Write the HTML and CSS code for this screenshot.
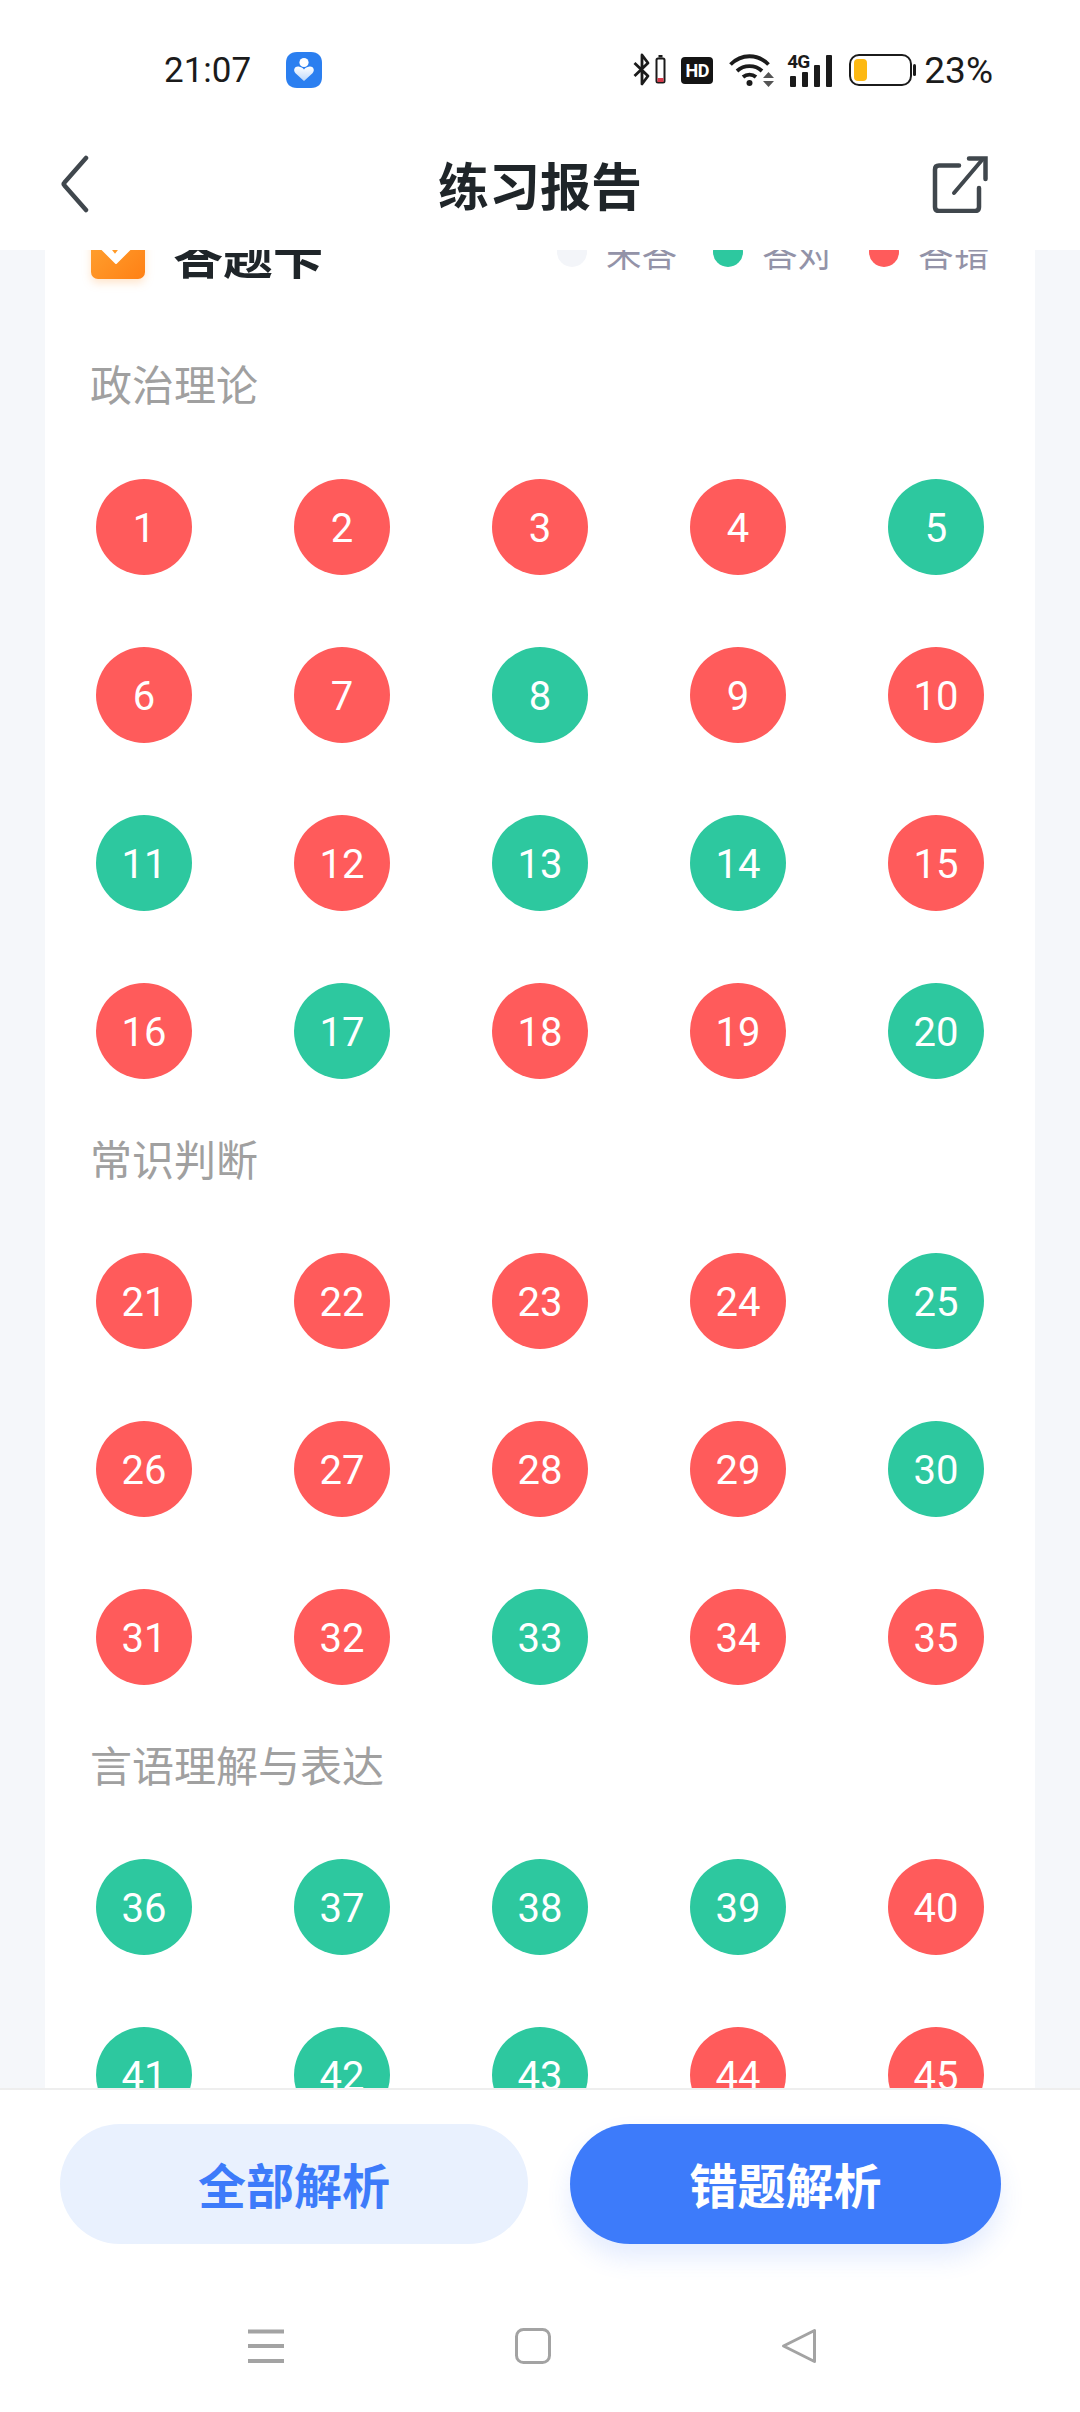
FILE: index.html
```html
<!DOCTYPE html>
<html lang="zh">
<head>
<meta charset="utf-8">
<title>练习报告</title>
<link rel="stylesheet" href="styles.css">
</head>
<body>
<div class="app">
  <header class="top">
    <div class="status">
      <span class="time">21:07</span>
      <svg class="guard" viewBox="0 0 36 36" width="36" height="36">
        <defs><linearGradient id="hg" x1="0" y1="0" x2="0" y2="1"><stop offset="0" stop-color="#ffffff"/><stop offset="1" stop-color="#bcd8fb"/></linearGradient></defs>
        <path d="M11 0H25C32 0 36 4 36 11V25C36 32 32 36 25 36H11C4 36 0 32 0 25V11C0 4 4 0 11 0Z" fill="#2b7ff0"/>
        <circle cx="18" cy="10.500" r="4.600" fill="#fff"/>
        <path d="M18 29L9.500 21.200C6.500 18 9 14 12.600 14.600C15 15 16.600 16 18 17.400C19.400 16 21 15 23.400 14.600C27 14 29.500 18 26.500 21.200Z" fill="url(#hg)"/>
      </svg>
      <div class="sys">
        <svg class="bt" viewBox="0 0 33 34" width="33" height="34">
          <path d="M1.500 10L15 23L9 31V2L15 10L1.500 23" fill="none" stroke="#1b1b1b" stroke-width="2.800" stroke-linejoin="round"/>
          <rect x="23.500" y="5.500" width="8" height="24" rx="1.500" fill="none" stroke="#1b1b1b" stroke-width="2"/>
          <rect x="25.500" y="2" width="4" height="2.500" fill="#1b1b1b"/>
          <rect x="24.500" y="25" width="6" height="4" fill="#d8394a"/>
        </svg>
        <span class="hd">HD</span>
        <svg class="wifi" viewBox="0 0 45 34" width="45" height="34">
          <path d="M1.500 11.500C12.500 0.500 28.500 0.500 39.500 11.500" fill="none" stroke="#1b1b1b" stroke-width="3.800"/>
          <path d="M8 18C15 11.500 26 11.500 33 18" fill="none" stroke="#1b1b1b" stroke-width="3.800"/>
          <path d="M14 24C17.800 20.800 23.200 20.800 27 24" fill="none" stroke="#1b1b1b" stroke-width="3.800"/>
          <circle cx="20.500" cy="30" r="3" fill="#1b1b1b"/>
          <path d="M34 25L39.500 19L45 25ZM34 28H45L39.500 34Z" fill="#555"/>
        </svg>
        <div class="sig">
          <span class="g4">4G</span>
          <svg viewBox="0 0 46 34" width="46" height="34">
            <rect x="3" y="23" width="6" height="11" rx="1" fill="#1b1b1b"/>
            <rect x="15" y="19" width="6" height="15" rx="1" fill="#1b1b1b"/>
            <rect x="27" y="12" width="6" height="22" rx="1" fill="#1b1b1b"/>
            <rect x="39" y="2" width="6" height="32" rx="1" fill="#1b1b1b"/>
          </svg>
        </div>
        <svg class="batt" viewBox="0 0 67 32" width="67" height="32">
          <rect x="1" y="1" width="61" height="30" rx="9" fill="none" stroke="#1b1b1b" stroke-width="2"/>
          <rect x="5" y="5" width="13" height="22" rx="4" fill="#fdb913"/>
          <rect x="64" y="10" width="3" height="12" rx="1.500" fill="#1b1b1b"/>
        </svg>
        <span class="pct">23%</span>
      </div>
    </div>
    <div class="nav">
      <svg class="back" viewBox="0 0 30 58" width="30" height="58">
        <path d="M26 3L4.500 27.500Q3 29 4.500 30.500L26 55" fill="none" stroke="#40474d" stroke-width="4.500" stroke-linecap="round"/>
      </svg>
      <h1 class="title">练习报告</h1>
      <svg class="share" viewBox="0 0 58 58" width="58" height="58">
        <path d="M27 10.500H7Q3 10.500 3 14.500V52Q3 56 7 56H43Q47 56 47 52V33" fill="none" stroke="#40474d" stroke-width="4.500" stroke-linecap="round"/>
        <path d="M22 38L50 5" fill="none" stroke="#40474d" stroke-width="4" stroke-linecap="round"/>
        <path d="M37 3.500H53.500V24" fill="none" stroke="#40474d" stroke-width="4.500" stroke-linecap="round"/>
      </svg>
    </div>
  </header>

  <main class="scroll">
    <section class="card">
      <div class="head">
        <div class="brand">
          <svg class="ico" viewBox="0 0 54 54" width="54" height="54">
            <defs><linearGradient id="og" x1="0" y1="0" x2="1" y2="1"><stop offset="0" stop-color="#ffa633"/><stop offset="1" stop-color="#ff8015"/></linearGradient></defs>
            <rect x="0" y="0" width="54" height="54" rx="7" fill="url(#og)"/>
            <path d="M11 12H39V24L25 38L11 24Z" fill="#fff" stroke="#fff" stroke-width="2" stroke-linejoin="round"/>
            <path d="M20 21L24 26L31 17" fill="none" stroke="#ff9a28" stroke-width="3.500"/>
          </svg>
          <h2 class="cardname">答题卡</h2>
        </div>
        <ul class="legend">
          <li class="key"><i class="dot none"></i>未答</li>
          <li class="key"><i class="dot ok"></i>答对</li>
          <li class="key"><i class="dot bad"></i>答错</li>
        </ul>
      </div>

      <h3 class="label">政治理论</h3>
      <div class="grid">
        <span class="q bad">1</span><span class="q bad">2</span><span class="q bad">3</span><span class="q bad">4</span><span class="q ok">5</span>
        <span class="q bad">6</span><span class="q bad">7</span><span class="q ok">8</span><span class="q bad">9</span><span class="q bad">10</span>
        <span class="q ok">11</span><span class="q bad">12</span><span class="q ok">13</span><span class="q ok">14</span><span class="q bad">15</span>
        <span class="q bad">16</span><span class="q ok">17</span><span class="q bad">18</span><span class="q bad">19</span><span class="q ok">20</span>
      </div>

      <h3 class="label">常识判断</h3>
      <div class="grid">
        <span class="q bad">21</span><span class="q bad">22</span><span class="q bad">23</span><span class="q bad">24</span><span class="q ok">25</span>
        <span class="q bad">26</span><span class="q bad">27</span><span class="q bad">28</span><span class="q bad">29</span><span class="q ok">30</span>
        <span class="q bad">31</span><span class="q bad">32</span><span class="q ok">33</span><span class="q bad">34</span><span class="q bad">35</span>
      </div>

      <h3 class="label">言语理解与表达</h3>
      <div class="grid">
        <span class="q ok">36</span><span class="q ok">37</span><span class="q ok">38</span><span class="q ok">39</span><span class="q bad">40</span>
        <span class="q ok">41</span><span class="q ok">42</span><span class="q ok">43</span><span class="q bad">44</span><span class="q bad">45</span>
      </div>
    </section>
  </main>

  <footer class="foot">
    <div class="actions">
      <button class="btn light">全部解析</button>
      <button class="btn solid">错题解析</button>
    </div>
    <div class="sysnav">
      <svg viewBox="0 0 36 36" width="36" height="36">
        <path d="M0 3.500H36M0 18H36M0 33H36" stroke="#a3a3a3" stroke-width="4"/>
      </svg>
      <svg viewBox="0 0 36 36" width="36" height="36">
        <rect x="1.500" y="1.500" width="33" height="33" rx="7" fill="none" stroke="#a3a3a3" stroke-width="3"/>
      </svg>
      <svg viewBox="0 0 36 36" width="36" height="36">
        <path d="M33.500 2.500V33.500L2.500 18Z" fill="none" stroke="#a3a3a3" stroke-width="3" stroke-linejoin="round"/>
      </svg>
    </div>
  </footer>
</div>
</body>
</html>
```

FILE: styles.css
```css
* { box-sizing: border-box; }
html, body { margin: 0; padding: 0; }
body {
  width: 1080px;
  height: 2412px;
  overflow: hidden;
  font-family: Roboto, "Noto Sans CJK SC", sans-serif;
  background: #f5f7fa;
}
.app {
  display: flex;
  flex-direction: column;
  height: 2412px;
}

/* top */
.top { height: 250px; flex: none; background: #fff; }
.status {
  height: 140px;
  display: flex;
  align-items: center;
  padding: 0 87px 0 164px;
}
.time { font-size: 35px; color: #1b1b1b; width: 122px; }
.guard { display: block; }
.sys { margin-left: auto; display: flex; align-items: center; }
.bt { display: block; margin-right: 15px; }
.hd {
  width: 32px;
  height: 27px;
  border-radius: 4px;
  background: #141414;
  color: #fff;
  font-size: 18px;
  font-weight: 700;
  line-height: 27px;
  text-align: center;
  letter-spacing: -0.5px;
  margin-right: 16px;
}
.wifi { display: block; margin-right: 13px; }
.sig { position: relative; width: 46px; height: 34px; margin-right: 16px; }
.sig svg { display: block; }
.g4 {
  position: absolute;
  left: 0;
  top: -1px;
  font-size: 19px;
  line-height: 19px;
  font-weight: 700;
  letter-spacing: -1px;
  color: #1b1b1b;
}
.batt { display: block; margin-right: 8px; }
.pct { font-size: 37px; color: #1b1b1b; }

.nav {
  height: 110px;
  display: grid;
  grid-template-columns: 1fr auto 1fr;
  align-items: center;
  padding: 0 60px 22px;
}
.title {
  margin: 0;
  font-family: "Noto Sans CJK SC", sans-serif;
  font-size: 51px;
  font-weight: 700;
  color: #1f2529;
}
.back { display: block; }
.share { display: block; justify-self: end; margin-right: 30px; }

/* scrolled content */
.scroll { flex: 1; min-height: 0; overflow: hidden; }
.card {
  margin: -60px 45px 0;
  background: #fff;
}
.head {
  height: 124px;
  display: flex;
  align-items: center;
  justify-content: space-between;
  padding: 0 46px;
}
.brand { display: flex; align-items: center; gap: 28px; }
.ico { display: block; filter: drop-shadow(0 4px 4px rgba(255, 150, 50, .25)); }
.cardname {
  margin: 0;
  font-family: "Noto Sans CJK SC", sans-serif;
  font-size: 50px;
  font-weight: 700;
  color: #1f2529;
}
.legend { display: flex; gap: 36px; margin: 0; padding: 0; list-style: none; }
.key {
  display: flex;
  align-items: center;
  gap: 19px;
  font-family: "Noto Sans CJK SC", sans-serif;
  font-size: 35.5px;
  line-height: 44px;
  color: #9393a8;
}
.dot { display: block; width: 30px; height: 30px; border-radius: 50%; }
.none { background: #f3f5f9; }
.ok { background: #2dc89f; }
.bad { background: #ff5b5b; }

.label {
  margin: 49px 0 65px 45px;
  font-family: "Noto Sans CJK SC", sans-serif;
  font-size: 42px;
  line-height: 60px;
  font-weight: 400;
  color: #a0a0a0;
}
.head + .label { margin-top: 39px; margin-bottom: 66px; }
.grid {
  display: grid;
  grid-template-columns: repeat(5, 1fr);
  row-gap: 72px;
  justify-items: center;
}
.q {
  width: 96px;
  height: 96px;
  border-radius: 50%;
  display: flex;
  align-items: center;
  justify-content: center;
  padding-top: 2px;
  color: #fff;
  font-size: 40px;
  font-weight: 400;
}

/* bottom */
.foot {
  height: 324px;
  flex: none;
  background: #fff;
  border-top: 2px solid #eeeeee;
  position: relative;
}
.actions {
  display: flex;
  justify-content: space-between;
  padding: 34px 79px 0 60px;
}
.btn {
  height: 120px;
  border: 0;
  border-radius: 60px;
  padding: 0 0 2px;
  font-family: "Noto Sans CJK SC", sans-serif;
  font-size: 48px;
  font-weight: 700;
}
.light { width: 468px; background: #e9f1fe; color: #3d7bfa; }
.solid {
  width: 431px;
  background: #3d7bfa;
  color: #fff;
  box-shadow: 0 14px 24px rgba(61, 123, 250, .14);
}
.sysnav {
  display: flex;
  padding: 84px 263px 0 248px;
  justify-content: space-between;
}
.sysnav svg { display: block; }
```
